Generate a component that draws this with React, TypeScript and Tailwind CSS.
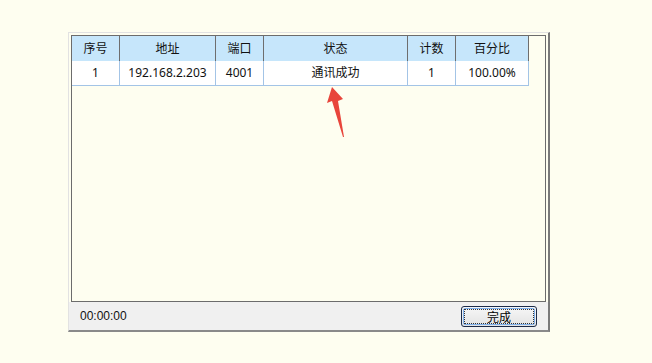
const cols = [
  { head: '序号', val: '1', w: 'w-[48px]' },
  { head: '地址', val: '192.168.2.203', w: 'w-[96px]' },
  { head: '端口', val: '4001', w: 'w-[48px]' },
  { head: '状态', val: '通讯成功', w: 'w-[144px]' },
  { head: '计数', val: '1', w: 'w-[48px]' },
  { head: '百分比', val: '100.00%', w: 'w-[73px]' },
];

export default function App() {
  return (
    <div className="relative w-[652px] h-[363px] bg-[#fefef0] pt-[32px] pl-[68px] overflow-hidden">
      {/* dialog frame */}
      <div className="w-[482px] h-[300px] flex flex-col border-l border-t border-[#e2e2e2] border-r-2 border-b-2 border-r-[#7a7a7a] border-b-[#8a8a8a] bg-[#fefef0]">
        <div className="pl-[2px] pt-[2px] pr-[2px]">
          {/* list view */}
          <div className="h-[267px] border border-[#6c6c6c] bg-[#fefef0] font-['Noto_Sans','Noto_Sans_CJK_SC',sans-serif] text-[12px] text-[#111]">
            <div className="flex">
              {cols.map((c) => (
                <div
                  key={c.head}
                  className={`${c.w} h-[25px] flex items-center justify-center bg-[#c6e6fb] border-r border-[#6e6e6e]`}
                >
                  {c.head}
                </div>
              ))}
            </div>
            <div className="flex">
              {cols.map((c) => (
                <div
                  key={c.head}
                  className={`${c.w} h-[25px] flex items-center justify-center bg-white border-r border-b border-[#a3c4e6]`}
                >
                  {c.val}
                </div>
              ))}
            </div>
          </div>
        </div>
        {/* bottom bar */}
        <div className="flex-1 flex items-center justify-between bg-[#f0f0f0] pl-[11px] pr-[11px]">
          <span className="font-['Liberation_Sans',sans-serif] text-[12px] text-[#111]">00:00:00</span>
          <button className="w-[76px] h-[21px] mt-[1px] rounded-[3px] border border-[#1b2a48] bg-gradient-to-b from-[#f7f7f7] to-[#e3e3e3] p-[1px]">
            <div className="w-full h-full rounded-[2px] border border-[#7fb0ec] flex items-center justify-center">
              <div className="w-full h-full border border-dotted border-[#333] flex items-center justify-center font-['Noto_Sans_CJK_SC',sans-serif] text-[12px] leading-none text-black">
                完成
              </div>
            </div>
          </button>
        </div>
      </div>

      {/* red arrow annotation */}
      <svg className="absolute left-0 top-0" width="652" height="363" viewBox="0 0 652 363">
        <polygon
          points="332,87 343,99 338,101 344,137 343,137 332,101 327,103"
          fill="#e8453b"
        />
      </svg>
    </div>
  );
}
